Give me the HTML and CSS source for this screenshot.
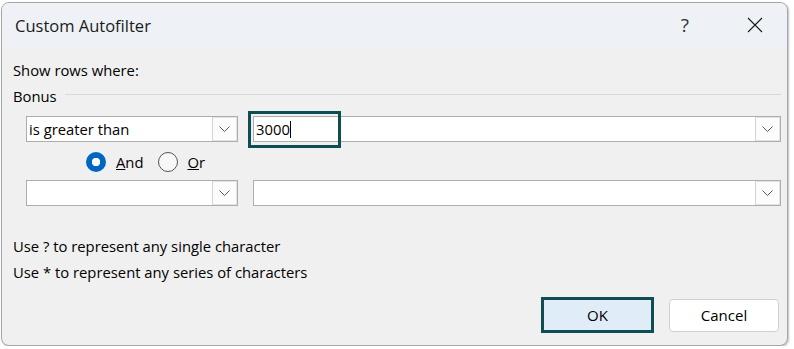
FILE: index.html
```html
<!DOCTYPE html>
<html lang="en">
<head>
    <meta charset="UTF-8">
    <meta name="viewport" content="width=device-width, initial-scale=1.0">
    <title>Custom Autofilter</title>
    <link rel="stylesheet" href="styles.css">
</head>
<body>
    <div class="dialog">
        <header class="titlebar">
            <span class="title">Custom Autofilter</span>
            <span class="help">?</span>
            <span class="close">
                <svg width="16" height="16" viewBox="0 0 16 16">
                    <path d="M1 1 L15 15 M15 1 L1 15" stroke="#1a1a1a" stroke-width="1.1" fill="none"/>
                </svg>
            </span>
        </header>
        <div class="content">
            <div class="caption">Show rows where:</div>
            <div class="group">
                <span>Bonus</span>
                <div class="rule"></div>
            </div>

            <div class="condition">
                <div class="combo op">
                    <span class="value">is greater than</span>
                    <span class="arrow">
                        <svg width="11" height="6" viewBox="0 0 11 6"><path d="M0.5 0.5 L5.5 5.5 L10.5 0.5" stroke="#555" fill="none"/></svg>
                    </span>
                </div>
                <div class="combo field">
                    <span class="value">3000<i class="caret"></i></span>
                    <span class="arrow">
                        <svg width="11" height="6" viewBox="0 0 11 6"><path d="M0.5 0.5 L5.5 5.5 L10.5 0.5" stroke="#555" fill="none"/></svg>
                    </span>
                    <div class="focus-ring"></div>
                </div>
            </div>

            <div class="join">
                <label class="radio">
                    <span class="dot checked"></span>
                    <span><u>A</u>nd</span>
                </label>
                <label class="radio">
                    <span class="dot"></span>
                    <span><u>O</u>r</span>
                </label>
            </div>

            <div class="condition">
                <div class="combo op">
                    <span class="value"></span>
                    <span class="arrow">
                        <svg width="11" height="6" viewBox="0 0 11 6"><path d="M0.5 0.5 L5.5 5.5 L10.5 0.5" stroke="#555" fill="none"/></svg>
                    </span>
                </div>
                <div class="combo field">
                    <span class="value"></span>
                    <span class="arrow">
                        <svg width="11" height="6" viewBox="0 0 11 6"><path d="M0.5 0.5 L5.5 5.5 L10.5 0.5" stroke="#555" fill="none"/></svg>
                    </span>
                </div>
            </div>

            <p class="hint first">Use ? to represent any single character</p>
            <p class="hint">Use * to represent any series of characters</p>

            <div class="buttons">
                <button class="ok">OK</button>
                <button class="cancel">Cancel</button>
            </div>
        </div>
    </div>
</body>
</html>
```

FILE: styles.css
```css
body {
    margin: 0;
    padding: 0;
    background-color: #fff;
    font-family: "Segoe UI", "Open Sans", "Noto Sans", sans-serif;
    font-size: 14.8px;
    color: #000;
}
.dialog {
    margin: 2px 0 0 1px;
    width: 785px;
    height: 342px;
    border: 1px solid #a6a6a6;
    border-radius: 8px;
    background-color: #f0f0f0;
    box-shadow: 1px 1px 2px rgba(0, 0, 0, 0.25);
    overflow: hidden;
}
.titlebar {
    height: 44px;
    background-color: #eef2f7;
    display: flex;
    align-items: center;
    padding-left: 13px;
}
.title {
    flex: 1;
    font-size: 16.5px;
    color: #1a1a1a;
}
.help {
    font-size: 19px;
    color: #333;
    margin-right: 58px;
}
.close {
    display: flex;
    margin-right: 24px;
}
.content {
    padding: 13px 6px 0 11px;
}
.caption {
    line-height: 20px;
}
.group {
    display: flex;
    align-items: center;
    line-height: 20px;
    margin-top: 6px;
}
.rule {
    flex: 1;
    height: 1px;
    background-color: #d9d9d9;
    margin: 0 0 4px 8px;
}
.condition {
    display: flex;
    gap: 15px;
    margin-top: 10px;
    padding-left: 13px;
}
.join + .condition {
    margin-top: 8px;
}
.combo {
    position: relative;
    display: flex;
    height: 24px;
    border: 1px solid #adadad;
    background-color: #fff;
}
.combo.op {
    width: 210px;
}
.combo.field {
    flex: 1;
}
.value {
    flex: 1;
    line-height: 24px;
    padding-left: 2px;
}
.caret {
    display: inline-block;
    width: 1px;
    height: 17px;
    background-color: #000;
    vertical-align: -3px;
}
.arrow {
    width: 25px;
    display: flex;
    align-items: center;
    justify-content: center;
    border: 1px solid #e3e3e3;
    border-left-color: #d4d4d4;
    background-color: #fcfcfc;
    box-sizing: border-box;
}
.focus-ring {
    position: absolute;
    left: -6px;
    top: -6px;
    width: 87px;
    height: 31px;
    border: 3px solid #0e4d52;
}
.join {
    display: flex;
    align-items: center;
    height: 20px;
    margin-top: 10px;
    padding-left: 73px;
    gap: 14px;
}
.radio {
    display: flex;
    align-items: center;
    gap: 10px;
}
.dot {
    width: 18px;
    height: 18px;
    border: 1px solid #555;
    border-radius: 50%;
    background-color: #f7f7f7;
}
.dot.checked {
    width: 20px;
    height: 20px;
    border: none;
    background: radial-gradient(circle, #fff 0 4px, #0067c0 4.5px);
}
.hint {
    margin: 6px 0 0;
    line-height: 20px;
}
.hint.first {
    margin-top: 30px;
}
.buttons {
    display: flex;
    justify-content: flex-end;
    align-items: center;
    gap: 15px;
    margin-top: 15px;
    padding-right: 2px;
}
button {
    font-family: inherit;
    font-size: 15px;
    color: #000;
    cursor: pointer;
}
.ok {
    width: 113px;
    height: 36px;
    border: 3px solid #0e4d52;
    background-color: #e0ecf8;
}
.cancel {
    width: 110px;
    height: 33px;
    border: 1px solid #d0d0d0;
    border-radius: 4px;
    background-color: #fff;
}
```
